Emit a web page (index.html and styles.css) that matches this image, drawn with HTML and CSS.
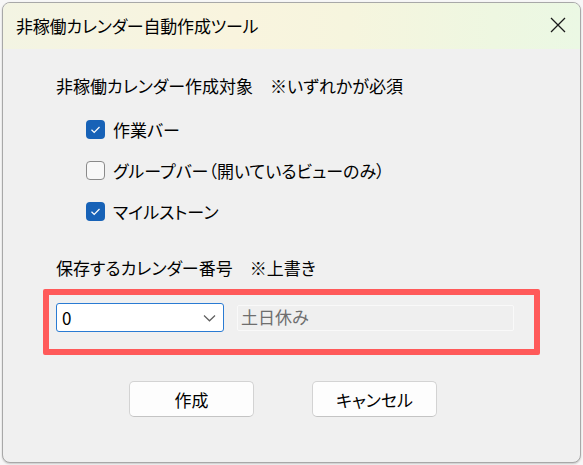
FILE: index.html
```html
<!DOCTYPE html>
<html lang="ja">
<head>
<meta charset="utf-8">
<link rel="stylesheet" href="styles.css">
</head>
<body>
<div class="window">
  <div class="titlebar">
    <span class="title">非稼働カレンダー自動作成ツール</span>
    <svg class="close" width="16" height="16" viewBox="0 0 16 16"><path d="M1 1 L15 15 M15 1 L1 15" stroke="#1a1a1a" stroke-width="1.3" fill="none"/></svg>
  </div>
  <div class="content">
    <div class="label">非稼働カレンダー作成対象　※いずれかが必須</div>
    <div class="checks">
      <div class="row"><span class="cb checked"><svg width="19" height="19" viewBox="0 0 19 19"><path d="M5.5 9.8 L8.2 12.4 L13.5 7" stroke="#fff" stroke-width="1.2" fill="none"/></svg></span><span class="cbl">作業バー</span></div>
      <div class="row"><span class="cb"></span><span class="cbl">グループバー（開いているビューのみ）</span></div>
      <div class="row"><span class="cb checked"><svg width="19" height="19" viewBox="0 0 19 19"><path d="M5.5 9.8 L8.2 12.4 L13.5 7" stroke="#fff" stroke-width="1.2" fill="none"/></svg></span><span class="cbl">マイルストーン</span></div>
    </div>
    <div class="label label2">保存するカレンダー番号　※上書き</div>
    <div class="highlight">
      <div class="combo"><span class="val">0</span><svg class="chev" width="13" height="8" viewBox="0 0 13 8"><path d="M1 1.5 L6.5 6.8 L12 1.5" stroke="#5f5f5f" stroke-width="1.2" fill="none"/></svg></div>
      <div class="field">土日休み</div>
    </div>
    <div class="buttons">
      <div class="btn">作成</div>
      <div class="btn">キャンセル</div>
    </div>
  </div>
</div>
</body>
</html>
```
FILE: styles.css
```css
html, body {
  margin: 0;
  padding: 0;
}
body {
  width: 583px;
  height: 465px;
  background: #f7f7f7;
  font-family: "Noto Sans CJK JP", "Noto Sans", sans-serif;
  font-feature-settings: "palt";
  font-weight: 400;
  color: #000;
  overflow: hidden;
}
.window {
  margin: 2px 0 0 2px;
  width: 577px;
  height: 459px;
  border: 1px solid #a8a8a8;
  border-radius: 8px;
  background: #f0f0f0;
  overflow: hidden;
  box-shadow: 0 1px 2px rgba(0,0,0,0.2);
}
.titlebar {
  height: 46px;
  display: flex;
  align-items: center;
  justify-content: space-between;
  padding: 0 14px 0 13px;
  background: linear-gradient(90deg, #f3f4e3 0%, #f9f4de 40%, #f6f5de 60%, #eef7e1 85%, #ebf8e4 100%);
}
.title {
  font-size: 17px;
  line-height: 24px;
  margin-top: -1px;
  letter-spacing: -0.2px;
}
.close {
  display: block;
  margin-top: -2px;
}
.content {
  padding: 25px 0 0 53px;
  display: flex;
  flex-direction: column;
}
.label {
  font-size: 17px;
  line-height: 24px;
  height: 24px;
  white-space: nowrap;
}
.checks {
  margin-top: 11px;
  display: flex;
  flex-direction: column;
}
.row {
  height: 41px;
  display: flex;
  align-items: center;
  padding-left: 30px;
}
.cb {
  width: 19px;
  height: 19px;
  box-sizing: border-box;
  border: 1.5px solid #8a8a8a;
  border-radius: 4px;
  background: #f8f8f8;
  display: flex;
}
.cb.checked {
  border: none;
  background: #1762b7;
}
.cb svg {
  display: block;
}
.cbl {
  margin-left: 8px;
  font-size: 17px;
  line-height: 24px;
  white-space: nowrap;
}
.label2 {
  margin-top: 24px;
}
.highlight {
  margin-top: 9px;
  margin-left: -13px;
  width: 497px;
  height: 66px;
  box-sizing: border-box;
  border: 6px solid #ff5a5a;
  border-radius: 2px;
  display: flex;
  align-items: flex-start;
  padding: 8px 0 0 7px;
}
.combo {
  width: 168px;
  height: 29px;
  box-sizing: border-box;
  background: #fff;
  border: 1px solid #2a7bd3;
  border-radius: 3px;
  display: flex;
  align-items: center;
  justify-content: space-between;
  padding: 0 7px 0 5px;
}
.val {
  font-size: 17px;
  line-height: 22px;
}
.chev {
  display: block;
}
.field {
  margin-left: 13px;
  margin-top: 2px;
  width: 277px;
  height: 26px;
  box-sizing: border-box;
  border: 1.5px solid #f9f9f9;
  border-radius: 2px;
  background: #efefef;
  font-size: 17px;
  line-height: 22px;
  color: #6e6e6e;
  padding-left: 3px;
}
.buttons {
  margin-top: 26px;
  padding-left: 73px;
  display: flex;
  gap: 58px;
}
.btn {
  width: 125px;
  height: 36px;
  box-sizing: border-box;
  background: #fdfdfd;
  border: 1px solid #d3d3d3;
  border-bottom-color: #c4c4c4;
  border-radius: 5px;
  display: flex;
  align-items: center;
  justify-content: center;
  font-size: 17px;
}
```
